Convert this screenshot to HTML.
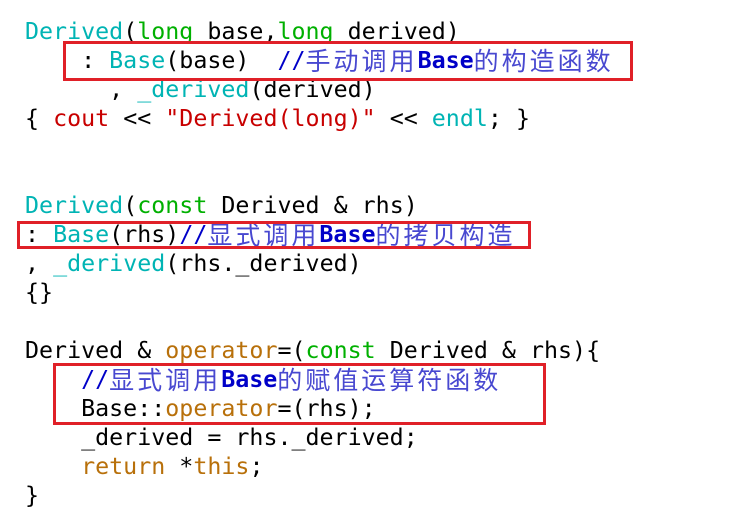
<!DOCTYPE html>
<html><head><meta charset="utf-8"><style>
body{margin:0;background:#fff;width:729px;height:524px;overflow:hidden;position:relative}
.code{position:absolute;left:25px;top:17px;font-family:"DejaVu Sans Mono","Liberation Mono",monospace;font-size:23.3px;color:#000}
.code div{height:29px;line-height:29px;white-space:pre;overflow:visible}
.t{color:#00b4b4}.k{color:#00b000}.o{color:#b8700a}.r{color:#c80000}.m{color:#0000c8}
.c{font-family:"Noto Sans CJK SC","WenQuanYi Zen Hei",sans-serif;color:#4848d0;font-size:25px;letter-spacing:3px;line-height:29px;vertical-align:top}
.b{font-weight:bold;color:#0000c8}
.box{position:absolute;border:3px solid #e02028;box-sizing:border-box}
</style></head><body>
<div class="code">
<div><span class="t">Derived</span>(<span class="k">long</span> base,<span class="k">long</span> derived)</div>
<div>    : <span class="t">Base</span>(base)  <span class="m">//</span><span class="c">手动调用</span><span class="b">Base</span><span class="c">的构造函数</span></div>
<div>      , <span class="t">_derived</span>(derived)</div>
<div>{ <span class="r">cout</span> &lt;&lt; <span class="r">"Derived(long)"</span> &lt;&lt; <span class="t">endl</span>; }</div>
<div> </div>
<div> </div>
<div><span class="t">Derived</span>(<span class="k">const</span> Derived &amp; rhs)</div>
<div>: <span class="t">Base</span>(rhs)<span class="m">//</span><span class="c">显式调用</span><span class="b">Base</span><span class="c">的拷贝构造</span></div>
<div>, <span class="t">_derived</span>(rhs._derived)</div>
<div>{}</div>
<div> </div>
<div>Derived &amp; <span class="o">operator</span>=(<span class="k">const</span> Derived &amp; rhs){</div>
<div>    <span class="m">//</span><span class="c">显式调用</span><span class="b">Base</span><span class="c">的赋值运算符函数</span></div>
<div>    Base::<span class="o">operator</span>=(rhs);</div>
<div>    _derived = rhs._derived;</div>
<div>    <span class="o">return</span> *<span class="o">this</span>;</div>
<div>}</div>
</div>
<div class="box" style="left:63px;top:41px;width:570px;height:40px"></div>
<div class="box" style="left:17px;top:221px;width:514px;height:28px"></div>
<div class="box" style="left:53px;top:363px;width:493px;height:62px"></div>
</body></html>
